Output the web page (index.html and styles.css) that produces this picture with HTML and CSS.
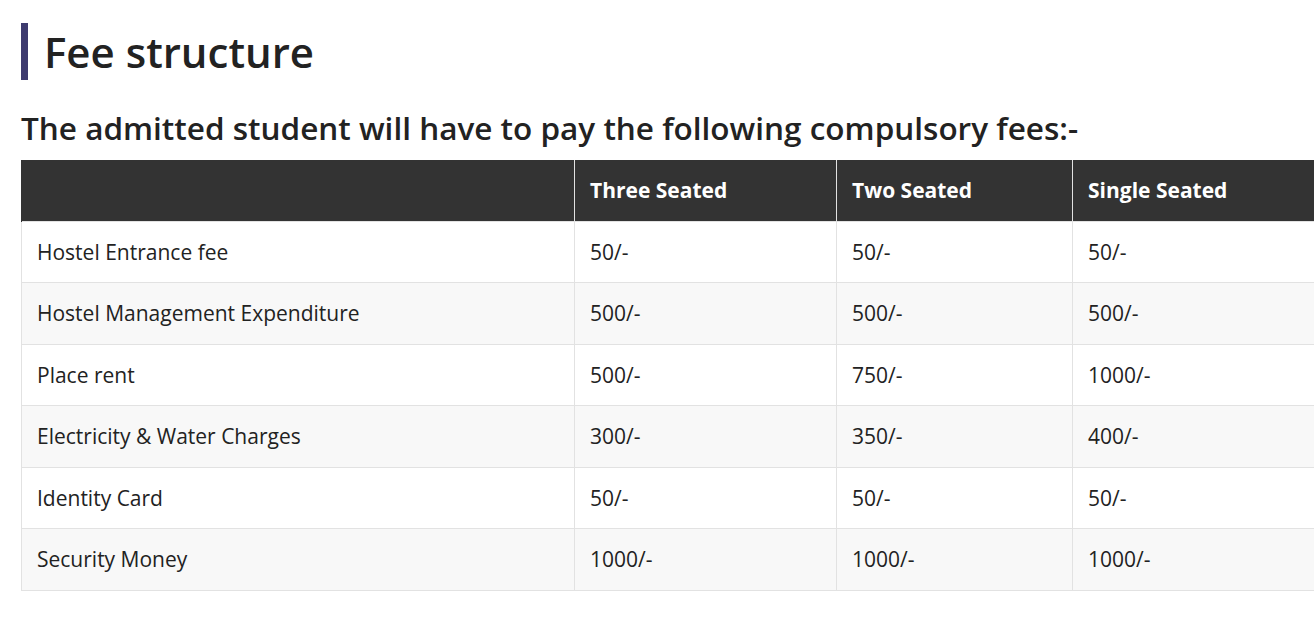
FILE: index.html
```html
<!DOCTYPE html>
<html>
<head>
<meta charset="utf-8">
<link rel="stylesheet" href="styles.css">
</head>
<body>
<div class="page">
  <h1 class="title">Fee structure</h1>
  <h2 class="subtitle">The admitted student will have to pay the following compulsory fees:-</h2>
  <table class="fees">
    <colgroup>
      <col class="c1"><col class="c2"><col class="c3"><col class="c4">
    </colgroup>
    <thead>
      <tr><th></th><th>Three Seated</th><th>Two Seated</th><th>Single Seated</th></tr>
    </thead>
    <tbody>
      <tr><td>Hostel Entrance fee</td><td>50/-</td><td>50/-</td><td>50/-</td></tr>
      <tr><td>Hostel Management Expenditure</td><td>500/-</td><td>500/-</td><td>500/-</td></tr>
      <tr><td>Place rent</td><td>500/-</td><td>750/-</td><td>1000/-</td></tr>
      <tr><td>Electricity &amp; Water Charges</td><td>300/-</td><td>350/-</td><td>400/-</td></tr>
      <tr><td>Identity Card</td><td>50/-</td><td>50/-</td><td>50/-</td></tr>
      <tr><td>Security Money</td><td>1000/-</td><td>1000/-</td><td>1000/-</td></tr>
    </tbody>
  </table>
</div>
</body>
</html>
```

FILE: styles.css
```css
html, body {
  margin: 0;
  padding: 0;
  background: #fff;
  overflow: hidden;
}
body {
  font-family: "Open Sans", "Noto Sans", sans-serif;
  color: #222;
}
.page {
  padding: 23px 0 0 21px;
}
.title {
  margin: 0;
  border-left: 7px solid #3d3a6e;
  padding-left: 16px;
  font-size: 42px;
  font-weight: 600;
  line-height: 57px;
  color: #222;
}
.subtitle {
  margin: 28px 0 12px 0;
  font-size: 31.5px;
  font-weight: 600;
  line-height: 40px;
  color: #222;
}
.fees {
  border-collapse: collapse;
  table-layout: fixed;
  width: 1340px;
  font-size: 21px;
}
.c1 { width: 553px; }
.c2 { width: 262px; }
.c3 { width: 236px; }
.fees th, .fees td {
  border: 1px solid #e2e2e2;
  padding: 0 15px;
  height: 60.5px;
  text-align: left;
  vertical-align: middle;
}
.fees th {
  background: #333;
  color: #fff;
  font-weight: 700;
}
.fees thead th {
  border-top: 0;
  border-bottom: 0;
  border-left: 1px solid #ddd;
}
.fees thead th:first-child {
  border-left: 1px solid #333;
}
.fees tbody tr:nth-child(even) td {
  background: #f8f8f8;
}
```
